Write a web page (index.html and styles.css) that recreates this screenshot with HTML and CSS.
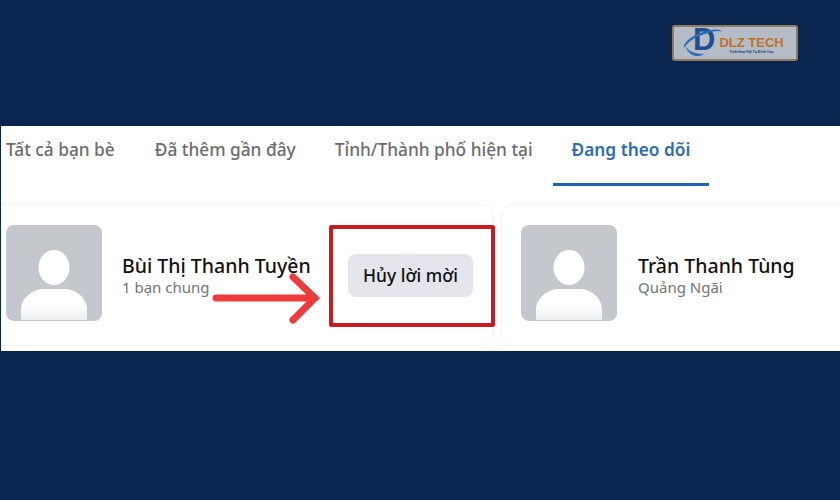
FILE: index.html
```html
<!DOCTYPE html>
<html lang="vi">
<head>
  <meta charset="UTF-8" />
  <title>Đang theo dõi</title>
  <link rel="stylesheet" href="styles.css">
</head>
<body>
  <div class="logo">
    <span class="logo-d">D</span>
    <svg class="logo-orbit" width="46" height="34" viewBox="0 0 46 34">
      <path d="M4 22C3 15 16 7 30 4C36 3 41 3 42 6C39 4 33 5 28 7C17 10 8 15 4 22Z" fill="#2a6cb2" />
      <path d="M5 17C5 23 12 28 24 28C17 33 6 29 5 17Z" fill="#2f70b5" />
    </svg>
    <div class="logo-text">
      <span class="logo-name">DLZ TECH</span>
      <span class="logo-tag">Tinh Hoa Hội Tụ Đỉnh Cao</span>
    </div>
  </div>

  <div class="panel">
    <div class="tabs">
      <div class="tab">Tất cả bạn bè</div>
      <div class="tab">Đã thêm gần đây</div>
      <div class="tab">Tỉnh/Thành phố hiện tại</div>
      <div class="tab active">Đang theo dõi</div>
    </div>

    <div class="cards">
      <div class="card card-first">
        <svg class="avatar" viewBox="0 0 96 96">
          <defs>
            <linearGradient id="bodyFade" x1="0" y1="0" x2="0" y2="1">
              <stop offset="0.5" stop-color="#ffffff" />
              <stop offset="1" stop-color="#eceef0" />
            </linearGradient>
          </defs>
          <ellipse cx="48" cy="42.5" rx="15.5" ry="17.5" fill="#fff" />
          <path d="M15 95V85C15 72 28 64 38 64H58C69 64 81 72 81 85V95Z" fill="url(#bodyFade)" />
        </svg>
        <div class="info">
          <div class="name">Bùi Thị Thanh Tuyền</div>
          <div class="sub">1 bạn chung</div>
        </div>
        <button class="cancel">Hủy lời mời</button>
      </div>

      <div class="card card-second">
        <svg class="avatar" viewBox="0 0 96 96">
          <ellipse cx="48" cy="42.5" rx="15.5" ry="17.5" fill="#fff" />
          <path d="M15 95V85C15 72 28 64 38 64H58C69 64 81 72 81 85V95Z" fill="url(#bodyFade)" />
        </svg>
        <div class="info">
          <div class="name">Trần Thanh Tùng</div>
          <div class="sub">Quảng Ngãi</div>
        </div>
      </div>
    </div>
  </div>

  <div class="red-box"></div>
  <svg class="arrow" width="112" height="54" viewBox="0 0 112 54">
    <path d="M4 26H103M81 5L103 26L81 48" fill="none" stroke="#ec3a3d" stroke-width="7" stroke-linecap="round" stroke-linejoin="miter" />
  </svg>
</body>
</html>
```

FILE: styles.css
```css
body {
  margin: 0;
  width: 840px;
  height: 500px;
  overflow: hidden;
  background: #0a2550;
  font-family: "Noto Sans", "Open Sans", sans-serif;
  padding-top: 126px;
  box-sizing: border-box;
}
.panel {
  margin-left: 1px;
  height: 225px;
  background: white;
  overflow: hidden;
}
.tabs {
  display: flex;
  height: 60px;
  padding-left: 5px;
}
.tab {
  padding: 11px 19.5px 0;
  font-size: 17.3px;
  line-height: 25px;
  font-weight: 500;
  color: #6a6c70;
  box-sizing: border-box;
  white-space: nowrap;
}
.tab:first-child {
  padding-left: 0;
  padding-right: 20.5px;
}
.tab.active {
  margin-left: 1px;
  padding: 11px 19px 0 18.5px;
  color: #2b6cb5;
  font-weight: 600;
  border-bottom: 3px solid #1c66b4;
}
.cards {
  display: flex;
  gap: 7px;
  margin-top: 18px;
}
.card {
  flex: none;
  display: flex;
  align-items: center;
  height: 142px;
  box-sizing: border-box;
  border: 1px solid #f5f5f6;
  border-radius: 12px;
}
.card-first {
  width: 520px;
  margin-left: -27px;
  padding-left: 31px;
}
.card-second {
  width: 360px;
  padding-left: 19px;
}
.avatar {
  width: 96px;
  height: 96px;
  flex: none;
  background: #c4c8cd;
  border-radius: 8px;
  margin-bottom: 4px;
}
.info {
  margin-left: 20px;
  width: 206px;
  white-space: nowrap;
}
.card-second .info {
  margin-left: 21px;
}
.name {
  font-size: 19.5px;
  line-height: 24px;
  font-weight: 500;
  color: #111;
}
.sub {
  font-size: 15px;
  line-height: 18px;
  color: #727479;
}
.cancel {
  width: 125px;
  height: 43px;
  border: 0;
  border-radius: 8px;
  background: #e4e6eb;
  color: #111;
  font-family: inherit;
  font-size: 17.4px;
  font-weight: 500;
  padding: 0;
  margin-left: 20px;
}
.red-box {
  position: absolute;
  left: 329px;
  top: 225px;
  width: 158px;
  height: 94px;
  border: 4px solid #c81b1f;
  border-radius: 2px;
}
.arrow {
  position: absolute;
  left: 212px;
  top: 272px;
}
.logo {
  position: absolute;
  left: 672px;
  top: 25px;
  width: 126px;
  height: 36px;
  box-sizing: border-box;
  border: 2px solid #8f7a5c;
  border-radius: 3px;
  background: #b5bcc6;
  display: flex;
  align-items: center;
}
.logo-orbit {
  position: absolute;
  left: 6px;
  top: -1px;
}
.logo-d {
  margin-left: 19px;
  margin-top: -6px;
  font-family: "Liberation Sans", sans-serif;
  font-size: 31px;
  line-height: 30px;
  font-weight: 700;
  color: #1c4f94;
}
.logo-text {
  position: relative;
  display: flex;
  flex-direction: column;
  align-items: center;
  margin-left: 4px;
  padding-top: 4px;
}
.logo-name {
  font-family: "Liberation Sans", sans-serif;
  font-size: 13px;
  line-height: 13px;
  font-weight: 700;
  color: #bd7424;
  white-space: nowrap;
}
.logo-tag {
  font-size: 3.5px;
  line-height: 6px;
  font-weight: 700;
  color: #23406e;
  white-space: nowrap;
}
```
